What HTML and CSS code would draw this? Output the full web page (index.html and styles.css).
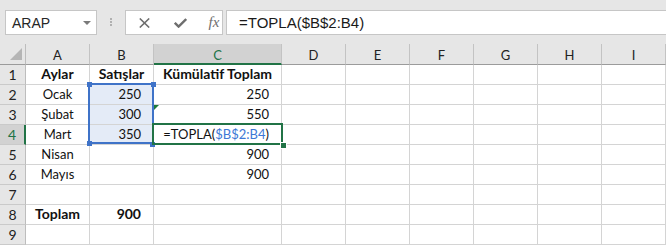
FILE: index.html
```html
<!DOCTYPE html>
<html lang="tr">
<head>
<meta charset="utf-8">
<title>Excel</title>
<link rel="stylesheet" href="styles.css">
</head>
<body>
<div class="app">
  <div class="toolbar">
    <div class="namebox"><span class="name">ARAP</span><span class="caret"></span></div>
    <div class="grip"><i></i><i></i><i></i></div>
    <div class="fxbox">
      <svg class="ic-x" width="11" height="10" viewBox="0 0 11 10"><path d="M0.8 0.5 L10.2 9.5 M10.2 0.5 L0.8 9.5" stroke="#6e6e6e" stroke-width="1.6" fill="none"/></svg>
      <svg class="ic-ok" width="13" height="10" viewBox="0 0 13 10"><path d="M0.8 4.8 L4.6 8.6 L12.2 1" stroke="#6e6e6e" stroke-width="2.4" fill="none"/></svg>
      <span class="fx">fx</span>
    </div>
    <div class="formula">=TOPLA($B$2:B4)</div>
  </div>
  <div class="sheet">
    <div class="grid">
      <div class="corner"><span class="tri"></span></div>
      <div class="ch">A</div><div class="ch">B</div><div class="ch on">C</div><div class="ch">D</div><div class="ch">E</div><div class="ch">F</div><div class="ch">G</div><div class="ch">H</div><div class="ch">I</div>

      <div class="rh">1</div>
      <div class="c ctr b">Aylar</div><div class="c ctr b">Satışlar</div><div class="c ctr b">Kümülatif Toplam</div><div class="c"></div><div class="c"></div><div class="c"></div><div class="c"></div><div class="c"></div><div class="c"></div>

      <div class="rh">2</div>
      <div class="c ctr">Ocak</div><div class="c r sel">250</div><div class="c r">250</div><div class="c"></div><div class="c"></div><div class="c"></div><div class="c"></div><div class="c"></div><div class="c"></div>

      <div class="rh">3</div>
      <div class="c ctr">Şubat</div><div class="c r sel">300</div><div class="c r err">550</div><div class="c"></div><div class="c"></div><div class="c"></div><div class="c"></div><div class="c"></div><div class="c"></div>

      <div class="rh on">4</div>
      <div class="c ctr">Mart</div><div class="c r sel">350</div><div class="c r">=TOPLA(<span class="ref">$B$2:B4</span>)</div><div class="c"></div><div class="c"></div><div class="c"></div><div class="c"></div><div class="c"></div><div class="c"></div>

      <div class="rh">5</div>
      <div class="c ctr">Nisan</div><div class="c"></div><div class="c r">900</div><div class="c"></div><div class="c"></div><div class="c"></div><div class="c"></div><div class="c"></div><div class="c"></div>

      <div class="rh">6</div>
      <div class="c ctr">Mayıs</div><div class="c"></div><div class="c r">900</div><div class="c"></div><div class="c"></div><div class="c"></div><div class="c"></div><div class="c"></div><div class="c"></div>

      <div class="rh">7</div>
      <div class="c"></div><div class="c"></div><div class="c"></div><div class="c"></div><div class="c"></div><div class="c"></div><div class="c"></div><div class="c"></div><div class="c"></div>

      <div class="rh">8</div>
      <div class="c ctr b">Toplam</div><div class="c r b">900</div><div class="c"></div><div class="c"></div><div class="c"></div><div class="c"></div><div class="c"></div><div class="c"></div><div class="c"></div>

      <div class="rh">9</div>
      <div class="c"></div><div class="c"></div><div class="c"></div><div class="c"></div><div class="c"></div><div class="c"></div><div class="c"></div><div class="c"></div><div class="c"></div>
    </div>

    <div class="range-sel"></div>
    <span class="h h-tl"></span><span class="h h-tr"></span><span class="h h-bl"></span><span class="h h-br"></span>
    <div class="edit-box"></div>
    <span class="fill-handle"></span>
  </div>
</div>
</body>
</html>
```

FILE: styles.css
```css
html, body {
  margin: 0;
  padding: 0;
}
body {
  background: #e6e6e6;
  width: 666px;
  height: 245px;
  overflow: hidden;
}
.app {
  width: 666px;
}

/* ---------- toolbar ---------- */
.toolbar {
  height: 44px;
  box-sizing: border-box;
  padding-top: 10px;
  display: flex;
  align-items: flex-start;
}
.namebox {
  margin-left: 5px;
  width: 102px;
  height: 25px;
  box-sizing: border-box;
  border: 1px solid #c6c6c6;
  background: #fff;
  display: flex;
  align-items: center;
  padding-left: 6px;
  font: 14px "Liberation Sans", Arial, sans-serif;
  color: #262626;
}
.caret {
  margin-left: auto;
  margin-right: 5px;
  width: 0;
  height: 0;
  border-left: 4px solid transparent;
  border-right: 4px solid transparent;
  border-top: 4px solid #7a7a7a;
}
.grip {
  width: 31px;
  height: 25px;
  box-sizing: border-box;
  padding-top: 8px;
  display: flex;
  flex-direction: column;
  align-items: center;
  gap: 1px;
}
.grip i {
  display: block;
  width: 2px;
  height: 2px;
  background: #b0b0b0;
}
.fxbox {
  width: 110px;
  height: 25px;
  box-sizing: border-box;
  border: 1px solid #c6c6c6;
  background: #fff;
  display: flex;
  align-items: center;
}
.ic-x { margin-left: 13px; display: block; }
.ic-ok { margin-left: 24px; display: block; }
.fx {
  margin-left: 22px;
  font: italic 15px "Liberation Serif", "Times New Roman", serif;
  color: #6e6e6e;
  line-height: 23px;
}
.formula {
  margin-left: 3px;
  flex: 0 0 auto;
  width: 440px;
  height: 25px;
  box-sizing: border-box;
  border: 1px solid #c6c6c6;
  border-right: none;
  background: #fff;
  padding-left: 12px;
  font: 15px "Liberation Sans", Arial, sans-serif;
  line-height: 23px;
  color: #1a1a1a;
  white-space: nowrap;
}

/* ---------- sheet ---------- */
.sheet {
  position: relative;
}
.grid {
  display: grid;
  grid-template-columns: 26px 64px 64px 128px repeat(6, 64px);
  grid-template-rows: 21px repeat(9, 20px);
  font-family: Lato, "Open Sans", sans-serif;
  font-size: 13px;
  color: #111;
}
.grid > div {
  box-sizing: border-box;
  white-space: nowrap;
  overflow: visible;
}
.corner {
  background: #e6e6e6;
  border-right: 1px solid #bdbdbd;
  border-bottom: 1px solid #9b9b9b;
  display: flex;
  justify-content: flex-end;
  align-items: flex-end;
  padding: 0 3px 4px 0;
}
.tri {
  width: 0;
  height: 0;
  border-left: 12px solid transparent;
  border-bottom: 12px solid #b5b5b5;
}
.ch {
  background: #e6e6e6;
  border-right: 1px solid #c3c3c3;
  border-bottom: 1px solid #9b9b9b;
  display: flex;
  align-items: center;
  justify-content: center;
  color: #222;
  padding-top: 1px;
}
.ch.on {
  background: #d2d2d2;
  border-bottom: 2px solid #217346;
  color: #217346;
  padding-top: 2px;
}
.rh {
  background: #e6e6e6;
  border-right: 1px solid #bdbdbd;
  border-bottom: 1px solid #cacaca;
  display: flex;
  align-items: center;
  justify-content: center;
  color: #222;
  font-size: 14px;
}
.rh.on {
  background: #d2d2d2;
  border-right: 2px solid #217346;
  color: #217346;
}
.c {
  background: #fff;
  border-right: 1px solid #d4d4d4;
  border-bottom: 1px solid #d4d4d4;
  display: flex;
  align-items: flex-end;
  line-height: 18px;
  padding-bottom: 1px;
  position: relative;
}
.c.ctr { justify-content: center; }
.c.r { justify-content: flex-end; padding-right: 12px; }
.c.b { font-weight: 700; font-size: 14px; }
.c.sel { background: #e4ebf7; }
.ref { color: #3d78d6; }
.c.err::before {
  content: "";
  position: absolute;
  left: 0;
  top: 0;
  width: 0;
  height: 0;
  border-top: 5px solid #1e7b3a;
  border-right: 5px solid transparent;
}

/* ---------- overlays ---------- */
.range-sel {
  position: absolute;
  left: 88px;
  top: 39px;
  width: 66px;
  height: 61px;
  box-sizing: border-box;
  border: 2px solid #3f73c8;
}
.h {
  position: absolute;
  width: 5px;
  height: 5px;
  background: #3f73c8;
}
.h-tl { left: 87px; top: 38px; }
.h-tr { left: 151px; top: 38px; }
.h-bl { left: 87px; top: 97px; }
.h-br { left: 150px; top: 98px; }
.edit-box {
  position: absolute;
  left: 152px;
  top: 79px;
  width: 131px;
  height: 22px;
  box-sizing: border-box;
  border: 2px solid #217346;
}
.fill-handle {
  position: absolute;
  left: 280px;
  top: 98px;
  width: 5px;
  height: 5px;
  background: #217346;
  border: 1px solid #fff;
}
```
